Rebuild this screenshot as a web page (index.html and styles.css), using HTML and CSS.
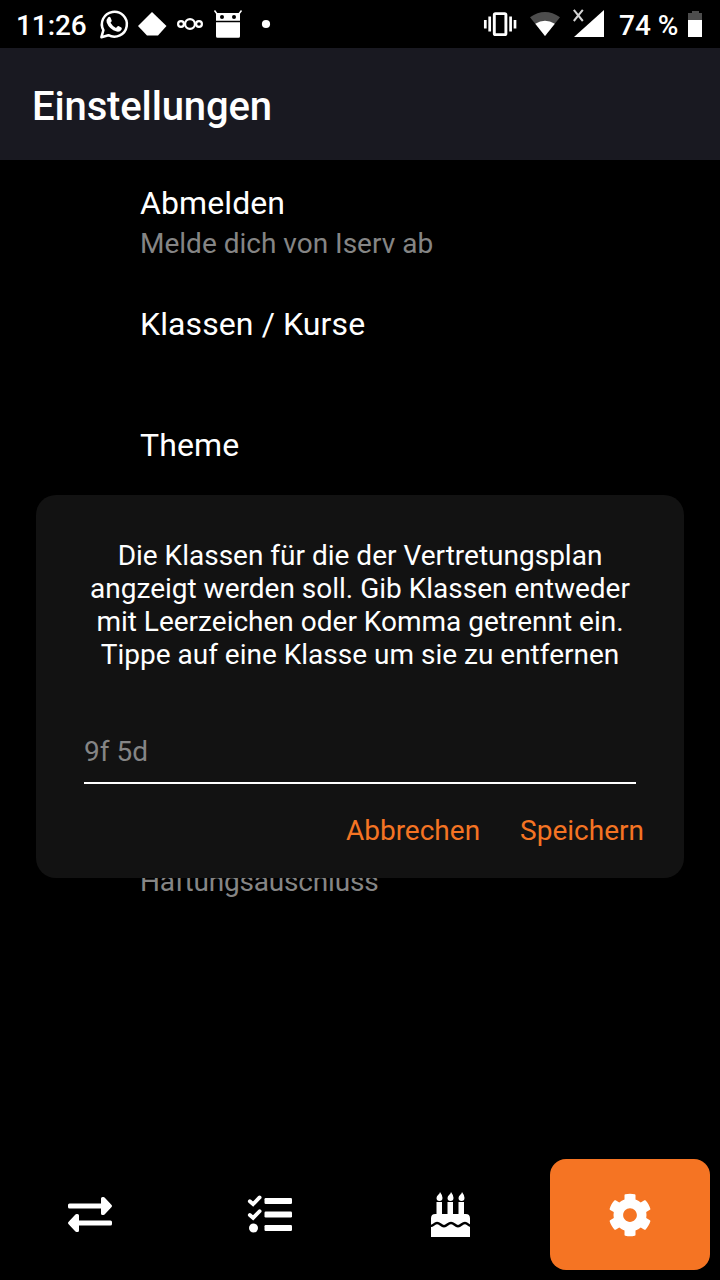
FILE: index.html
```html
<!DOCTYPE html>
<html lang="de">
<head>
<meta charset="utf-8">
<title>Einstellungen</title>
<link rel="stylesheet" href="styles.css">
</head>
<body>
<div class="screen">
  <div class="statusbar">
    <span class="clock">11:26</span>
    <svg class="status-left" width="180" height="48" viewBox="96 0 180 48">
      <path d="M101.400 37.200L103.400 30.200A12.500 12.500 0 1 1 108.400 35.200Z" fill="none" stroke="#fff" stroke-width="2.500" stroke-linejoin="round"/>
      <path d="M108.200 17.200q1.500-1.200 2.300.4l1.200 2.800q.3.8-1.200 2.400 2 3.600 5.500 5.100 1.700-2.100 2.500-1.800l2.800 1.400q.9.5.3 1.900-1.400 2.800-4.900 2.100-7.300-1.900-10-9-.6-3.300 1.500-5.300z" fill="#fff"/>
      <path d="M152 12L166.500 26 158 35.500H147L138 26Z" fill="#fff"/>
      <g fill="none" stroke="#fff" stroke-width="2.200"><circle cx="190" cy="24" r="4.900"/><circle cx="181" cy="24" r="2.900"/><circle cx="199" cy="24" r="2.900"/></g>
      <path d="M214.500 10.500l3.200 4.200M241.500 10.500l-3.200 4.200" stroke="#fff" stroke-width="1.500"/>
      <path d="M216 20.800V14.200q0-1.200 1.200-1.200h21.600q1.200 0 1.200 1.200v6.600zM216 22.300h24v14q0 1.500-1.500 1.500h-21q-1.500 0-1.500-1.500z" fill="#fff"/>
      <circle cx="222" cy="17" r="2"/><circle cx="234" cy="17" r="2"/>
      <circle cx="266" cy="24" r="4.100" fill="#fff"/>
    </svg>
    <svg class="status-right" width="124" height="48" viewBox="482 0 124 48">
      <rect x="494.300" y="13.600" width="11.600" height="21" rx="1.200" fill="none" stroke="#fff" stroke-width="2.900"/>
      <path d="M489.700 16.500v15M485.300 20v8.500M510.600 16.500v15M515 20v8.500" stroke="#fff" stroke-width="2.700"/>
      <path d="M545 36L530 17.300Q545 6.700 560 17.300Z" fill="#4d4d4d"/>
      <path d="M545 36L535.300 23.800Q545 17.700 554.800 23.800Z" fill="#fff"/>
      <path d="M574 37H604V10Z" fill="#fff"/>
      <path d="M573.800 9.800l9 11.200M582.800 9.800l-9 11.200" stroke="#d4d4d4" stroke-width="2"/>
    </svg>
    <span class="percent">74 %</span>
    <svg class="battery" width="14" height="26" viewBox="0 0 14 26"><path d="M0 9V2H4V0H11V2H14V9Z" fill="#4d4d4d"/><path d="M0 9H14V26H0Z" fill="#fff"/></svg>
  </div>
  <header class="header"><h1 class="title">Einstellungen</h1></header>
  <main class="settings">
    <div class="item"><div class="name">Abmelden</div><div class="detail">Melde dich von Iserv ab</div></div>
    <div class="item"><div class="name">Klassen / Kurse</div></div>
    <div class="item"><div class="name">Theme</div></div>
    <div class="item item-legal"><div class="detail">Haftungsauschluss</div></div>
  </main>
  <nav class="tabs">
    <div class="tab"><svg width="48" height="41" viewBox="66 1194 48 41"><g fill="#fff" stroke="#fff" stroke-width="3" stroke-linejoin="round"><path d="M69.500 1205H102.500V1198.600H103.500L110.500 1206 103.500 1213.400H102.500V1207H69.500Z"/><path d="M110.500 1222H77.500V1215.600H76.500L69.500 1223 76.500 1230.400H77.500V1224H110.500Z"/></g></svg></div>
    <div class="tab"><svg width="48" height="41" viewBox="246 1194 48 41"><g fill="#fff"><rect x="264.500" y="1198" width="27.500" height="6" rx="1.200"/><rect x="264.500" y="1211.500" width="27.500" height="6" rx="1.200"/><rect x="264.500" y="1225" width="27.500" height="6" rx="1.200"/><circle cx="253.500" cy="1228" r="4.500"/></g><path d="M249.800 1201.200l3.300 2.900 6.500-6.700M249.800 1215l3.300 2.900 6.500-6.700" fill="none" stroke="#fff" stroke-width="3.800" stroke-linecap="round"/></svg></div>
    <div class="tab"><svg width="42" height="49" viewBox="429 1190 42 49"><g fill="#fff"><path d="M440 1192q2.500 3.300 2.500 5.800 0 3.200-3 3.200t-3-3q0-2 2-3.500 1.200-1 1.500-2.500zM451 1192q2.500 3.300 2.500 5.800 0 3.200-3 3.200t-3-3q0-2 2-3.500 1.200-1 1.500-2.500zM462 1192q2.500 3.300 2.500 5.800 0 3.200-3 3.200t-3-3q0-2 2-3.500 1.200-1 1.500-2.500z"/><path d="M436.500 1202h5.500v12h5.500v-12h5.500v12h5.500v-12h5.500v12h1.700q4.300 0 4.300 4.300v18.700h-39v-18.700q0-4.300 4.300-4.300h1.200z"/></g><path d="M430 1226c4 0 4-3 7-3s4 3.200 7 3.200 4-3.200 7-3.200 4 3.200 7 3.200 4-3.200 7-3.200 3 3 7 3" fill="none" stroke="#000" stroke-width="2.500"/></svg></div>
    <div class="tab active"><svg width="44" height="44" viewBox="0 0 512 512"><path fill="#fff" d="M487.400 315.700l-42.600-24.600c4.300-23.200 4.300-47 0-70.200l42.600-24.600c4.900-2.800 7.100-8.600 5.500-14-11.100-35.600-30-67.800-54.700-94.600-3.800-4.100-10-5.100-14.800-2.300L380.800 110c-17.900-15.400-38.500-27.300-60.800-35.100V25.800c0-5.600-3.900-10.500-9.400-11.700-36.700-8.200-74.300-7.800-109.200 0-5.500 1.200-9.400 6.100-9.400 11.700V75c-22.200 7.900-42.800 19.800-60.800 35.100L88.700 85.500c-4.900-2.800-11-1.900-14.800 2.300-24.700 26.700-43.600 58.900-54.700 94.600-1.700 5.400.6 11.200 5.500 14L67.300 221c-4.300 23.200-4.300 47 0 70.200l-42.600 24.600c-4.900 2.800-7.100 8.600-5.500 14 11.100 35.600 30 67.800 54.700 94.600 3.800 4.100 10 5.100 14.800 2.300l42.600-24.600c17.900 15.400 38.500 27.300 60.800 35.100v49.200c0 5.600 3.900 10.500 9.400 11.700 36.700 8.200 74.300 7.800 109.200 0 5.500-1.200 9.400-6.100 9.400-11.700v-49.200c22.200-7.900 42.800-19.800 60.800-35.100l42.600 24.600c4.900 2.800 11 1.900 14.800-2.300 24.700-26.700 43.600-58.900 54.700-94.600 1.500-5.500-.7-11.300-5.600-14.100zM256 336c-44.100 0-80-35.900-80-80s35.900-80 80-80 80 35.900 80 80-35.900 80-80 80z"/></svg></div>
  </nav>
  <section class="dialog">
    <p class="message">Die Klassen für die der Vertretungsplan<br>angzeigt werden soll. Gib Klassen entweder<br>mit Leerzeichen oder Komma getrennt ein.<br>Tippe auf eine Klasse um sie zu entfernen</p>
    <div class="field">9f 5d</div>
    <div class="actions"><span>Abbrechen</span><span>Speichern</span></div>
  </section>
</div>
</body>
</html>
```
FILE: styles.css
```css
* { box-sizing: border-box; }
body { margin: 0; background: #000; font-family: Roboto, sans-serif; color: #fff; }
svg { display: block; flex: none; }
.screen { position: relative; display: flex; flex-direction: column; width: 720px; height: 1280px; overflow: hidden; background: #000; }
.statusbar { display: flex; height: 48px; flex: none; font-size: 28px; font-weight: 500; line-height: 51px; white-space: nowrap; }
.clock { width: 80px; margin-left: 16px; letter-spacing: -0.1px; }
.status-right { margin-left: 206px; }
.percent { width: 69px; margin-left: 13px; }
.battery { margin-top: 11px; }
.header { display: flex; align-items: center; height: 112px; flex: none; padding: 6px 32px 0; background: #191921; }
.title { margin: 0; font-size: 40px; font-weight: 500; line-height: 48px; letter-spacing: -0.13px; }
.settings { flex: 1; padding: 22px 0 0 140px; }
.item { height: 121px; }
.name { font-size: 32px; line-height: 42px; letter-spacing: 0.1px; }
.detail { font-size: 28px; line-height: 40px; color: #858585; }
.item-legal { padding-top: 317px; height: 360px; letter-spacing: -0.18px; }
.tabs { position: relative; display: grid; grid-template-columns: repeat(4, 180px); height: 131px; flex: none; padding: 10px 0; }
.tab { display: flex; align-items: center; justify-content: center; margin: 0 10px; border-radius: 16px; }
.active { background: #f57423; }
.dialog { position: absolute; left: 36px; top: 495px; width: 648px; height: 383px; padding: 44px 40px 0 48px; border-radius: 20px; background: #121212; font-size: 28px; }
.message { margin: 0 8px 0 0; text-align: center; line-height: 33px; white-space: nowrap; }
.field { height: 74px; margin: 39px 8px 0 0; padding-top: 25px; border-bottom: 2px solid #fff; line-height: 33px; color: #858585; }
.actions { display: flex; justify-content: flex-end; gap: 40px; margin-top: 30px; line-height: 33px; color: #f57423; }
```
